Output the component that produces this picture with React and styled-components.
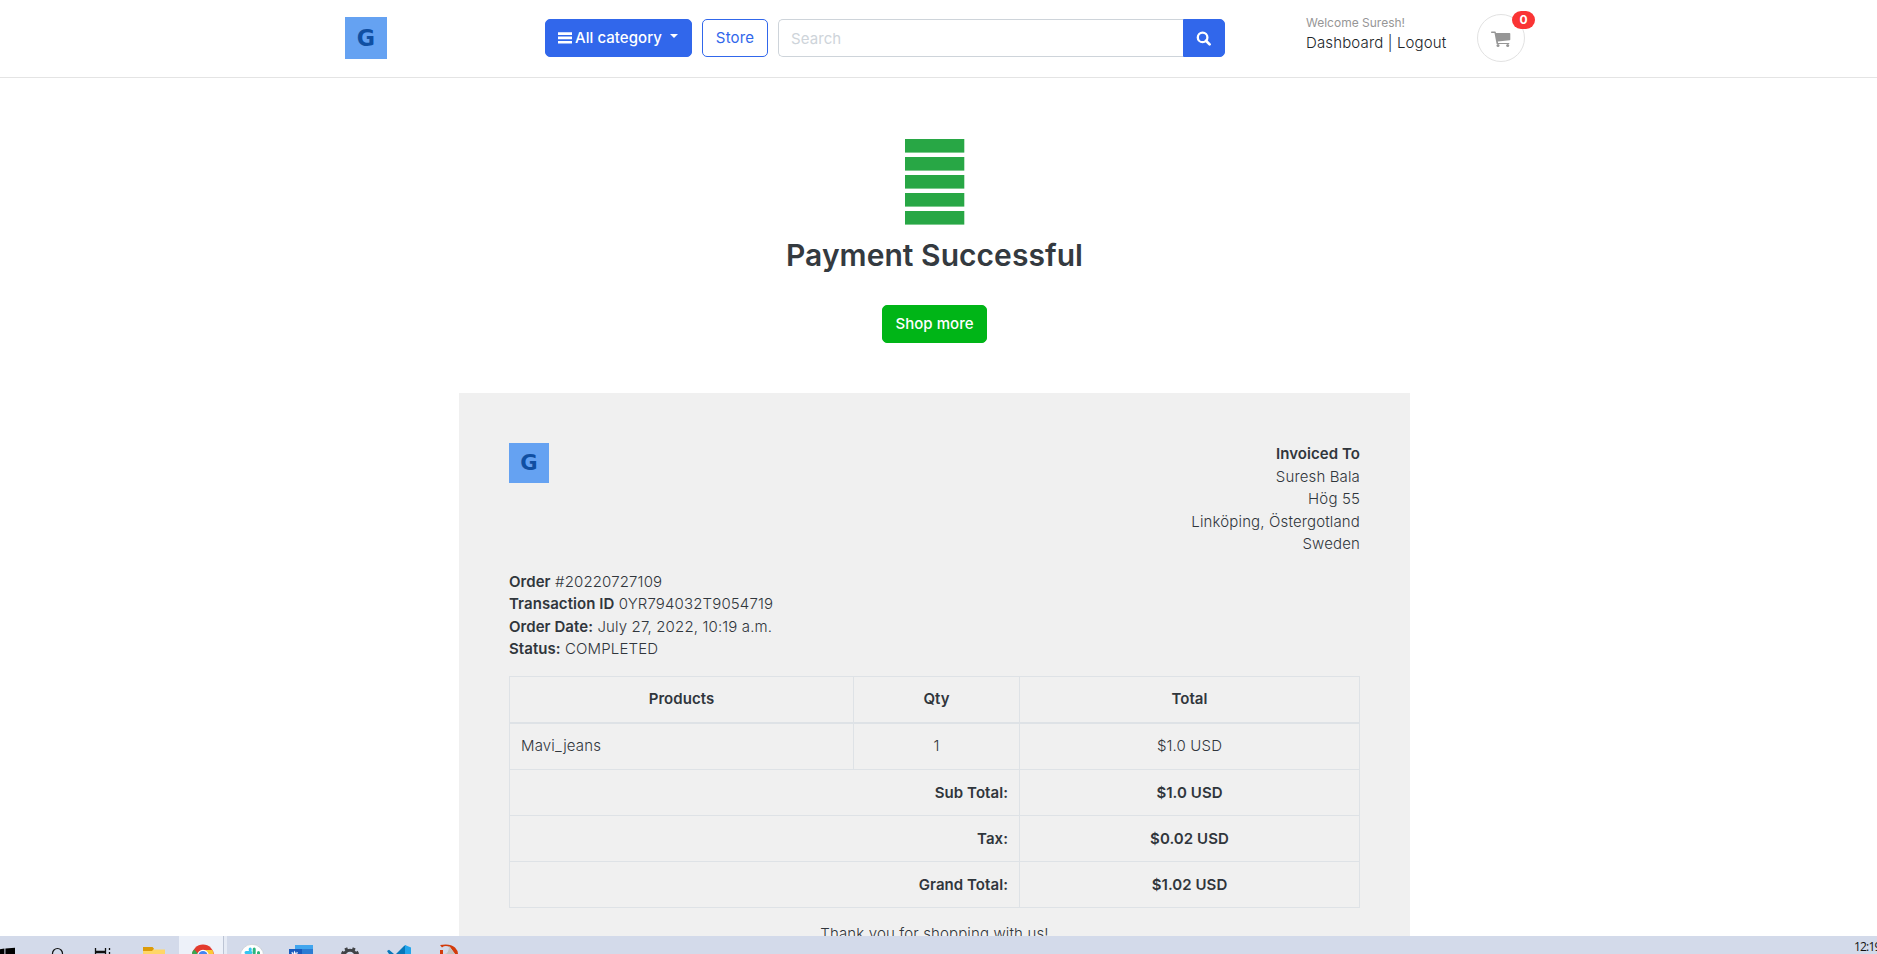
import React from "react";
import styled, { createGlobalStyle } from "styled-components";

const Global = createGlobalStyle`
  *, *::before, *::after { box-sizing: border-box; }
  body {
    margin: 0;
    background: #fff;
    color: #30363c;
    font-family: Inter, "Liberation Sans", sans-serif;
    font-size: 15px;
    font-weight: 300;
    letter-spacing: 0.14px;
    line-height: 1.5;
  }
`;

const Screen = styled.div`
  display: flex;
  flex-direction: column;
  width: 1877px;
  height: 954px;
  overflow: hidden;
`;

const Page = styled.div`
  flex: 0 0 936px;
  overflow: hidden;
`;

const Header = styled.header`
  height: 78px;
  border-bottom: 1px solid #e4e4e4;
  padding-left: 345px;
  display: flex;
  align-items: flex-start;
`;

const LogoBox = styled.span`
  display: flex;
  align-items: center;
  justify-content: center;
  width: ${(p) => p.$size}px;
  height: ${(p) => p.$size}px;
  margin-top: ${(p) => p.$top || 0}px;
  background: #65a2f2;
  color: #104fa2;
  font-family: "DejaVu Sans", sans-serif;
  font-weight: 700;
  font-size: ${(p) => p.$size * 0.53}px;
  letter-spacing: 0;
  line-height: 1;
`;

const Actions = styled.nav`
  display: flex;
  gap: 10px;
  margin: 19px 0 0 158px;
`;

const Button = styled.button`
  display: flex;
  align-items: center;
  justify-content: center;
  width: ${(p) => p.$width}px;
  height: 38px;
  padding: ${(p) => p.$drop || 0}px 0 0;
  border: 1px solid ${(p) => p.$color};
  border-radius: 5px;
  background: ${(p) => (p.$outline ? "#fff" : p.$color)};
  color: ${(p) => (p.$outline ? p.$color : "#fff")};
  font: ${(p) => (p.$outline ? 400 : 500)} 15px/1.5 Inter, sans-serif;
  letter-spacing: ${(p) => (p.$outline ? 0.15 : 0.04)}px;
`;

const Bars = styled.svg`
  width: 14px;
  height: 12px;
  margin-right: 3px;
  fill: currentColor;
`;

const Caret = styled.span`
  margin: -5px 1px 0 8px;
  border: 4.5px solid transparent;
  border-top-color: currentColor;
  border-bottom: 0;
`;

const SearchGroup = styled.form`
  display: flex;
  width: 447px;
  height: 38px;
`;

const SearchInput = styled.input`
  flex: 1;
  min-width: 0;
  padding: 2px 12px 0;
  border: 1px solid #ced4da;
  border-right: 0;
  border-radius: 5px 0 0 5px;
  font: 400 15px/1.5 Inter, sans-serif;
  letter-spacing: 0.08px;
  &::placeholder { color: #ced4da; opacity: 1; }
`;

const SearchButton = styled(Button)`
  padding-right: 1px;
  border-radius: 0 5px 5px 0;
`;

const Account = styled.div`
  width: 171px;
  margin: 14px 0 0 81px;
  color: #212529;
`;

const Welcome = styled.div`
  color: #969696;
  font-size: 12px;
  font-weight: 400;
  letter-spacing: 0;
  line-height: 18px;
`;

const AccountLinks = styled.div`
  line-height: 22px;
`;

const Cart = styled.div`
  position: relative;
  display: flex;
  align-items: center;
  justify-content: center;
  width: 48px;
  height: 48px;
  margin-top: 14px;
  padding-top: 2px;
  border: 1px solid #e2e2e2;
  border-radius: 50%;
  color: #969696;
`;

const Badge = styled.span`
  position: absolute;
  top: -4px;
  right: -11px;
  width: 23px;
  height: 18px;
  border-radius: 9px;
  background: #fa3434;
  color: #fff;
  font-size: 12px;
  font-weight: 700;
  line-height: 18px;
  text-align: center;
`;

const Success = styled.section`
  display: flex;
  flex-direction: column;
  align-items: center;
  width: 1869px;
  padding-top: 61px;
`;

const Stack = styled.svg`
  width: 59px;
  height: 86px;
  fill: #28a745;
  overflow: visible;
`;

const Title = styled.h2`
  margin: 12px 0 32px;
  color: #343a40;
  font-size: 30px;
  font-weight: 640;
  line-height: 36px;
  letter-spacing: 0.05px;
`;

const Invoice = styled.article`
  width: 951px;
  min-height: 600px;
  margin: 50px 0 0 459px;
  padding: 50px;
  background: #f0f0f0;
`;

const InvoiceTop = styled.div`
  display: flex;
  justify-content: space-between;
  align-items: flex-start;
`;

const Lines = styled.div`
  text-align: ${(p) => p.$align || "left"};
`;

const Recipient = styled(Lines)`
  padding-top: 0.25px;
`;

const Strong = styled.strong`
  font-weight: 600;
  letter-spacing: 0.06px;
`;

const Order = styled(Lines)`
  margin: 15px 0 15.5px;
`;

const Table = styled.table`
  width: 850px;
  table-layout: fixed;
  border-collapse: collapse;
  border: 1px solid #dee2e6;
`;

const Cell = styled.td`
  height: ${(p) => p.$height || 46}px;
  padding: 0 11px;
  border: 1px solid #dee2e6;
  border-bottom-width: ${(p) => (p.$head ? 2 : 1)}px;
  font-weight: ${(p) => (p.$bold ? 600 : 300)};
  letter-spacing: ${(p) => (p.$bold ? 0.06 : 0.14)}px;
  text-align: ${(p) => p.$align || "center"};
`;

const Thanks = styled.p`
  margin: 15px 0 0;
  text-align: center;
`;

const Taskbar = styled.footer`
  display: flex;
  flex: 0 0 18px;
  overflow: hidden;
  background: #d3daea;
`;

const TaskIcons = styled.svg`
  width: 480px;
  height: 18px;
`;

const Clock = styled.span`
  flex: none;
  width: 23px;
  margin-left: auto;
  overflow: hidden;
  white-space: nowrap;
  color: #111;
  font: 400 12px/21px "Open Sans", sans-serif;
  letter-spacing: -0.8px;
`;

const blue = "#3167eb";

const address = ["Suresh Bala", "Hög 55", "Linköping, Östergotland", "Sweden"];
const details = [
  ["Order", "#20220727109"],
  ["Transaction ID", "0YR794032T9054719"],
  ["Order Date:", "July 27, 2022, 10:19 a.m."],
  ["Status:", "COMPLETED"],
];
const totals = [
  ["Sub Total:", "$1.0 USD"],
  ["Tax:", "$0.02 USD"],
  ["Grand Total:", "$1.02 USD"],
];

function SearchIcon() {
  return (
    <svg width="15" height="15" viewBox="0 0 15 15" fill="none" stroke="currentColor">
      <circle cx="6.6" cy="6.4" r="4.8" strokeWidth="2.3" />
      <path d="M10 9.8l3.6 3.6" strokeWidth="2.7" strokeLinecap="round" />
    </svg>
  );
}

function CartIcon() {
  return (
    <svg width="20" height="17" viewBox="0 0 20 17" fill="currentColor">
      <path d="M.6.6h3.5c.4 0 .6.2.7.6l.2.8h13.6c.4 0 .7.3.7.7v5.8c0 .4-.3.6-.6.7L6.8 10.5l.3 1.4h10.6c.9 0 .9 1.2 0 1.2H6.2c-.4 0-.7-.3-.7-.6L3.5 1.9H.6C-.2 1.9-.2.6.6.6z" />
      <circle cx="7" cy="14.4" r="1.5" />
      <circle cx="16.7" cy="14.4" r="1.5" />
    </svg>
  );
}

function TaskbarIcons() {
  return (
    <TaskIcons viewBox="0 0 480 18">
      <path d="M0 13.2l4.4-.6V18H0zM5.4 12.5L15 11.8V18H5.4z" fill="#000" />
      <circle cx="57.5" cy="17.5" r="5" fill="none" stroke="#111" strokeWidth="1.2" />
      <path d="M95.5 12v3.4h10V12M95.5 18v-1.5h10V18M109.5 12v2M109.5 16v2" fill="none" stroke="#111" strokeWidth="1.3" />
      <path d="M143 11h9l2 2.5h11V18h-22z" fill="#ffd667" />
      <path d="M143 11h9.5l1.5 1.7-2 2.3h-9z" fill="#dc9b09" />
      <path d="M179 0h44v18h-44z" fill="#edf1f9" />
      <path d="M223 0h1v18h-1z" fill="#bcc4d4" />
      <path d="M224 0h3v18h-3z" fill="#e6ebf5" />
      <circle cx="203" cy="19.5" r="11" fill="#e33b2e" />
      <path d="M192.2 18v-2l2-2.5 4 4.5z" fill="#36a852" />
      <path d="M204 14h8.6l1.4 6h-7z" fill="#fcc934" />
      <circle cx="203" cy="19.5" r="5.2" fill="#4285f4" stroke="#fff" strokeWidth="1.2" />
      <circle cx="252" cy="20" r="11.7" fill="#fff" stroke="#c3c8cf" strokeWidth=".7" />
      <path d="M250.2 13v1M246 16.4h5" stroke="#36c5f0" strokeWidth="3" strokeLinecap="round" />
      <path d="M254.2 13v4M258.5 16.4v2" stroke="#2eb67d" strokeWidth="3" strokeLinecap="round" />
      <path d="M295 9h18v5h-18z" fill="#41a5ee" />
      <path d="M295 13h18v5h-18z" fill="#2b7cd3" />
      <rect x="289" y="13" width="13" height="8" fill="#185abd" />
      <path d="M292 16l1 4 1.6-4 1.6 4 1-4" fill="none" stroke="#fff" strokeWidth="1.1" />
      <circle cx="350" cy="20.5" r="6.2" fill="none" stroke="#414347" strokeWidth="3" />
      <path d="M346.8 14.5l-1-2.6M353.2 14.5l1-2.6M344 17.5l-2.4-1.4M356 17.5l2.4-1.4" stroke="#414347" strokeWidth="3" />
      <path d="M387 15l2-1.2 5 4.2h-5zM404 10l1.5-1v9H396z" fill="#0877b9" />
      <path d="M405 9l6 2.5V18h-6z" fill="#22a5ec" />
      <path d="M440 9q10-2 15 2.5 3 3 3 6.500h-3l-5-7q-5-2-8 .5zM440 14h3v4h-3z" fill="#d33b0b" />
      <path d="M449 10l6 8h-10q4-1 4-8z" fill="#c5c3c1" />
    </TaskIcons>
  );
}

export default function App() {
  return (
    <Screen>
      <Global />
      <Page>
        <Header>
          <LogoBox $size={42} $top={17}>G</LogoBox>
          <Actions>
            <Button $width={147} $color={blue}>
              <Bars viewBox="0 0 14 12"><path d="M0 .3h14v2.7H0zM0 4.6h14v2.7H0zM0 8.9h14v2.7H0z" /></Bars>
              All category
              <Caret />
            </Button>
            <Button $width={66} $color={blue} $outline>Store</Button>
            <SearchGroup>
              <SearchInput placeholder="Search" />
              <SearchButton type="button" $width={42} $color={blue}><SearchIcon /></SearchButton>
            </SearchGroup>
          </Actions>
          <Account>
            <Welcome>Welcome Suresh!</Welcome>
            <AccountLinks>Dashboard | Logout</AccountLinks>
          </Account>
          <Cart>
            <CartIcon />
            <Badge>0</Badge>
          </Cart>
        </Header>
        <Success>
          <Stack viewBox="0 0 59 86">
            {[0, 1, 2, 3, 4].map((i) => (
              <rect key={i} x="0" y={i * 18} width="59.3" height="13.6" />
            ))}
          </Stack>
          <Title>Payment Successful</Title>
          <Button $width={105} $color="#00b517" $drop={1}>Shop more</Button>
        </Success>
        <Invoice>
          <InvoiceTop>
            <LogoBox $size={40}>G</LogoBox>
            <Recipient $align="right">
              <Strong>Invoiced To</Strong>
              {address.map((line) => <div key={line}>{line}</div>)}
            </Recipient>
          </InvoiceTop>
          <Order>
            {details.map(([label, value]) => (
              <div key={label}><Strong>{label}</Strong> {value}</div>
            ))}
          </Order>
          <Table>
            <colgroup><col width="344" /><col width="166" /><col width="340" /></colgroup>
            <thead>
              <tr>
                {["Products", "Qty", "Total"].map((h) => <Cell as="th" key={h} $head $bold>{h}</Cell>)}
              </tr>
            </thead>
            <tbody>
              <tr>
                <Cell $align="left" $height={47}>Mavi_jeans</Cell>
                <Cell>1</Cell>
                <Cell>$1.0 USD</Cell>
              </tr>
              {totals.map(([label, value]) => (
                <tr key={label}>
                  <Cell as="th" colSpan={2} $bold $align="right">{label}</Cell>
                  <Cell as="th" $bold>{value}</Cell>
                </tr>
              ))}
            </tbody>
          </Table>
          <Thanks>Thank you for shopping with us!</Thanks>
        </Invoice>
      </Page>
      <Taskbar>
        <TaskbarIcons />
        <Clock>12:19</Clock>
      </Taskbar>
    </Screen>
  );
}
